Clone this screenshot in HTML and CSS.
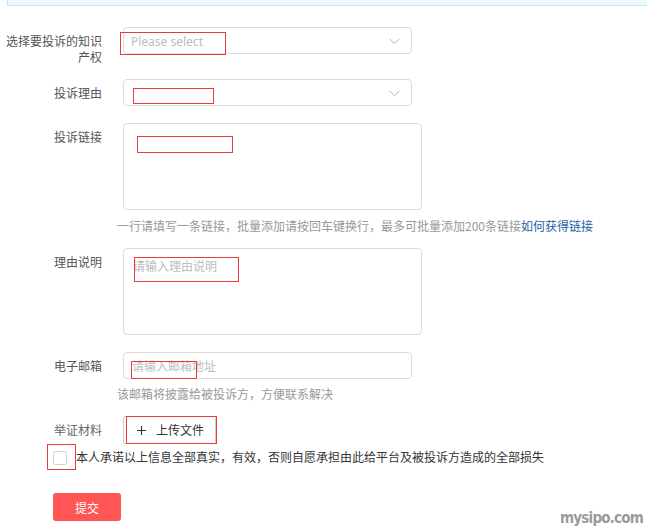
FILE: index.html
```html
<!DOCTYPE html>
<html lang="zh-CN">
<head>
<meta charset="utf-8">
<title>投诉</title>
<link rel="stylesheet" href="styles.css">
</head>
<body>
<div class="topbar"></div>
<form class="form">
  <div class="item item-ip">
    <div class="label">选择要投诉的知识<br>产权</div>
    <div class="control">
      <div class="select">
        <span class="placeholder">Please select</span>
        <svg class="chevron" width="11" height="7" viewBox="0 0 11 7"><polyline points="0.5,0.8 5.5,5.8 10.5,0.8" fill="none" stroke="#b4b4b4" stroke-width="1"/></svg>
      </div>
      <span class="mark mark-ip"></span>
    </div>
  </div>

  <div class="item item-reason">
    <div class="label">投诉理由</div>
    <div class="control">
      <div class="select">
        <span class="placeholder"></span>
        <svg class="chevron" width="11" height="7" viewBox="0 0 11 7"><polyline points="0.5,0.8 5.5,5.8 10.5,0.8" fill="none" stroke="#a9b4c2" stroke-width="1"/></svg>
      </div>
      <span class="mark mark-reason"></span>
    </div>
  </div>

  <div class="item item-links">
    <div class="label">投诉链接</div>
    <div class="control">
      <div class="field">
        <div class="textarea"></div>
        <span class="mark mark-links"></span>
      </div>
      <p class="help">一行请填写一条链接，批量添加请按回车键换行，最多可批量添加200条链接<a class="link" href="#">如何获得链接</a></p>
    </div>
  </div>

  <div class="item item-desc">
    <div class="label">理由说明</div>
    <div class="control">
      <div class="textarea"><span class="placeholder">请输入理由说明</span></div>
      <span class="mark mark-desc"></span>
    </div>
  </div>

  <div class="item item-email">
    <div class="label">电子邮箱</div>
    <div class="control">
      <div class="field">
        <div class="input"><span class="placeholder">请输入邮箱地址</span></div>
        <span class="mark mark-email"></span>
      </div>
      <p class="help help-email">该邮箱将披露给被投诉方，方便联系解决</p>
    </div>
  </div>

  <div class="item item-upload">
    <div class="label label-upload">举证材料</div>
    <div class="control">
      <div class="upload">
        <svg class="plus" width="9" height="9" viewBox="0 0 9 9"><path d="M4.5 0V9M0 4.5H9" stroke="#333" stroke-width="1.1" fill="none"/></svg>
        <span class="upload-text">上传文件</span>
      </div>
      <span class="mark mark-upload"></span>
    </div>
  </div>

  <div class="agree">
    <span class="checkbox"></span>
    <span class="agree-text">本人承诺以上信息全部真实，有效，否则自愿承担由此给平台及被投诉方造成的全部损失</span>
    <span class="mark mark-check"></span>
  </div>

  <div class="actions">
    <button type="button" class="submit">提交</button>
  </div>
</form>
<div class="watermark">mysipo.com</div>
</body>
</html>
```

FILE: styles.css
```css
html, body {
  margin: 0;
  padding: 0;
  background: #fff;
}
body {
  font-family: "Noto Sans CJK SC", "Noto Sans", sans-serif;
  font-size: 12px;
  color: #333;
  width: 647px;
  height: 531px;
  position: relative;
  overflow: hidden;
}
.topbar {
  margin-left: 7px;
  height: 6px;
  background: #eef8ff;
  border-left: 1px solid #c9e6fb;
  border-bottom: 1px solid #c9e6fb;
  box-sizing: border-box;
}
.form {
  margin: 0;
  padding-top: 21px;
}
.item {
  display: grid;
  grid-template-columns: 96px 1fr;
  column-gap: 21px;
  margin-left: 6px;
  align-items: start;
}
.label {
  text-align: right;
  line-height: 16px;
  padding-top: 6px;
  color: #555;
  white-space: nowrap;
}
.label-upload {
  color: #666;
}
.control {
  position: relative;
}
.field {
  position: relative;
}
.item-ip { margin-bottom: 14px; }
.item-reason { margin-bottom: 17px; }
.item-links { margin-bottom: 14px; }
.item-desc { margin-bottom: 17px; }
.item-email { margin-bottom: 14px; }

.select {
  box-sizing: border-box;
  width: 289px;
  height: 27px;
  border: 1px solid #dcdcdc;
  border-radius: 4px;
  display: flex;
  align-items: center;
  justify-content: space-between;
  padding: 0 11px 0 7px;
  background: #fff;
}
.placeholder {
  color: #bcbcbc;
  line-height: 16px;
}
.select .placeholder {
  font-family: "Noto Sans", "Open Sans", sans-serif;
  font-size: 12px;
  margin-top: 3px;
}
.chevron {
  display: block;
  margin-top: 1px;
}
.textarea {
  box-sizing: border-box;
  width: 299px;
  height: 87px;
  border: 1px solid #dcdcdc;
  border-radius: 4px;
  padding: 9px 9px;
  background: #fff;
}
.textarea .placeholder {
  display: block;
}
.input {
  box-sizing: border-box;
  width: 289px;
  height: 27px;
  border: 1px solid #dcdcdc;
  border-radius: 4px;
  padding: 0 8px;
  display: flex;
  align-items: center;
  background: #fff;
}
.help {
  margin: 8px 0 0 -6px;
  line-height: 16px;
  color: #999;
  white-space: nowrap;
}
.help-email {
  margin-top: 7px;
}
.link {
  color: #1f5ea8;
  text-decoration: none;
}
.upload {
  box-sizing: border-box;
  width: 93px;
  height: 28px;
  border: 1px solid #cfcfcf;
  border-radius: 2px;
  display: flex;
  align-items: center;
  padding-left: 13px;
  gap: 10px;
  background: #fff;
}
.plus {
  display: block;
}
.upload-text {
  color: #333;
  line-height: 16px;
}
.mark {
  position: absolute;
  box-sizing: border-box;
  border: 1px solid #ec3a3a;
  pointer-events: none;
}
.mark-ip { left: -3px; top: 5px; width: 106px; height: 23px; }
.mark-reason { left: 10px; top: 9px; width: 81px; height: 16px; }
.mark-links { left: 14px; top: 13px; width: 96px; height: 17px; }
.mark-desc { left: 11px; top: 9px; width: 105px; height: 25px; }
.mark-email { left: 8px; top: 9px; width: 66px; height: 18px; }
.mark-upload { left: 3px; top: 0; width: 91px; height: 28px; }
.mark-check { left: -6px; top: 0; width: 29px; height: 26px; }

.agree {
  position: relative;
  margin-left: 53px;
  height: 26px;
  display: flex;
  align-items: center;
}
.checkbox {
  box-sizing: border-box;
  width: 14px;
  height: 14px;
  border: 1px solid #d4d4d4;
  border-radius: 2px;
  background: #fff;
  margin-right: 9px;
  margin-top: 1px;
}
.agree-text {
  color: #333;
  line-height: 16px;
  white-space: nowrap;
}
.actions {
  margin: 23px 0 0 53px;
}
.submit {
  box-sizing: border-box;
  width: 68px;
  height: 28px;
  border: none;
  border-radius: 3px;
  background: #ff5555;
  color: #fff;
  font-family: "Noto Sans CJK SC", sans-serif;
  font-size: 12px;
  padding: 0;
  cursor: pointer;
}
.watermark {
  position: absolute;
  right: 4px;
  bottom: 4px;
  font-family: "DejaVu Sans Condensed", "DejaVu Sans", sans-serif;
  font-weight: bold;
  font-size: 15px;
  line-height: 17px;
  color: #9a9a9a;
  letter-spacing: -0.8px;
}
```
